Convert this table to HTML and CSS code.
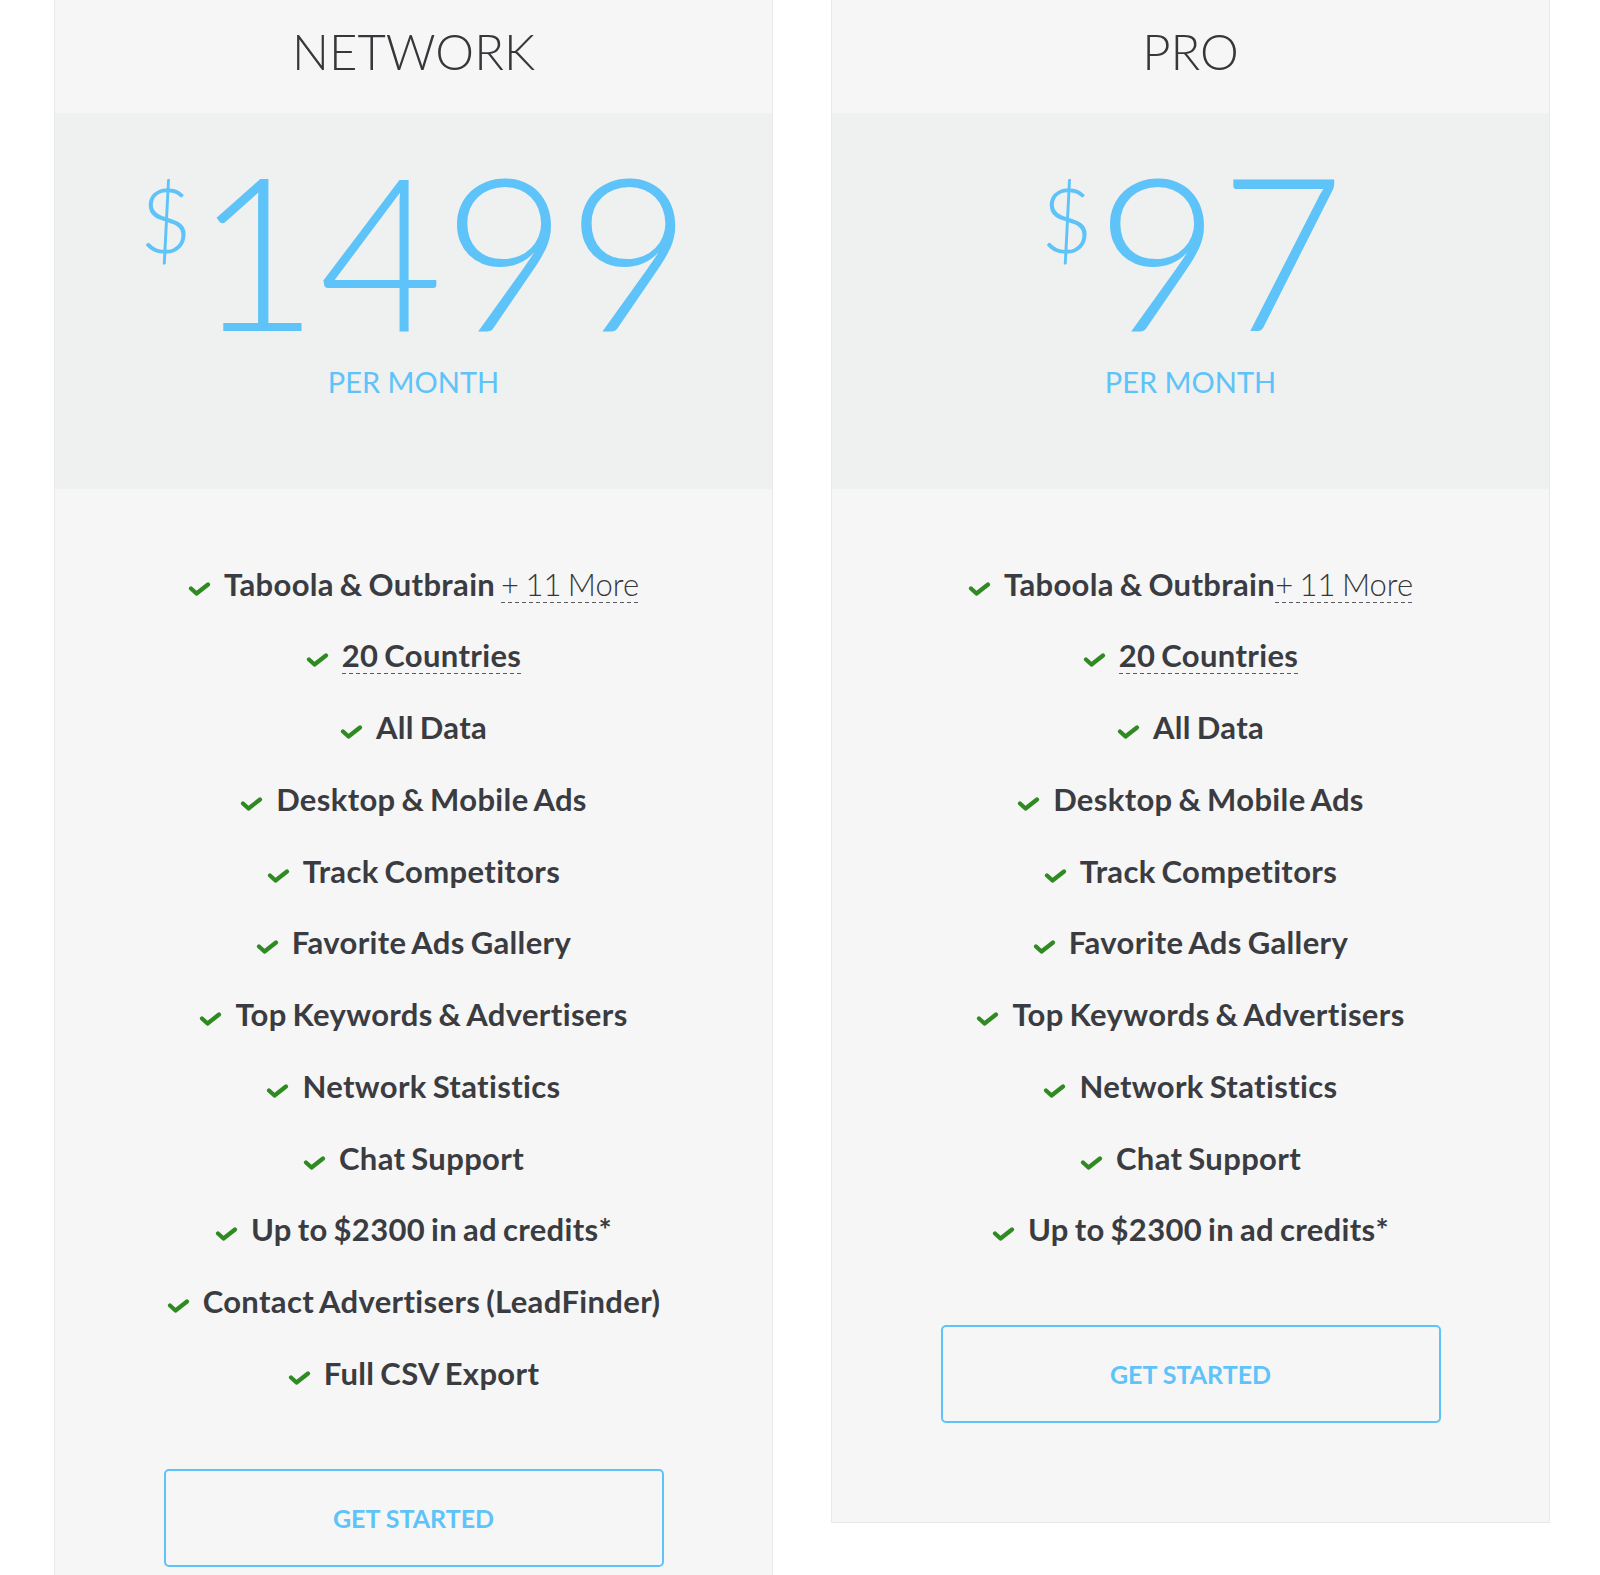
FILE: index.html
```html
<!DOCTYPE html>
<html lang="en">
<head>
<meta charset="utf-8">
<title>Pricing</title>
<link rel="stylesheet" href="styles.css">
</head>
<body>
<div class="page">
  <div class="plans">
    <section class="card">
      <header class="card-head"><h2>NETWORK</h2></header>
      <div class="price-band">
        <div class="price"><span class="cur">$</span><span class="amount">1499</span></div>
        <div class="period">PER MONTH</div>
      </div>
      <ul class="features">
        <li><svg class="chk" viewBox="0 0 22 14"><polyline points="2.5,6.5 8,11.5 19.5,2.5"/></svg>Taboola &amp; Outbrain <span class="more">+ 11 More</span></li>
        <li><svg class="chk" viewBox="0 0 22 14"><polyline points="2.5,6.5 8,11.5 19.5,2.5"/></svg><span class="dash">20 Countries</span></li>
        <li><svg class="chk" viewBox="0 0 22 14"><polyline points="2.5,6.5 8,11.5 19.5,2.5"/></svg>All Data</li>
        <li><svg class="chk" viewBox="0 0 22 14"><polyline points="2.5,6.5 8,11.5 19.5,2.5"/></svg>Desktop &amp; Mobile Ads</li>
        <li><svg class="chk" viewBox="0 0 22 14"><polyline points="2.5,6.5 8,11.5 19.5,2.5"/></svg>Track Competitors</li>
        <li><svg class="chk" viewBox="0 0 22 14"><polyline points="2.5,6.5 8,11.5 19.5,2.5"/></svg>Favorite Ads Gallery</li>
        <li><svg class="chk" viewBox="0 0 22 14"><polyline points="2.5,6.5 8,11.5 19.5,2.5"/></svg>Top Keywords &amp; Advertisers</li>
        <li><svg class="chk" viewBox="0 0 22 14"><polyline points="2.5,6.5 8,11.5 19.5,2.5"/></svg>Network Statistics</li>
        <li><svg class="chk" viewBox="0 0 22 14"><polyline points="2.5,6.5 8,11.5 19.5,2.5"/></svg>Chat Support</li>
        <li><svg class="chk" viewBox="0 0 22 14"><polyline points="2.5,6.5 8,11.5 19.5,2.5"/></svg>Up to $2300 in ad credits*</li>
        <li><svg class="chk" viewBox="0 0 22 14"><polyline points="2.5,6.5 8,11.5 19.5,2.5"/></svg>Contact Advertisers (LeadFinder)</li>
        <li><svg class="chk" viewBox="0 0 22 14"><polyline points="2.5,6.5 8,11.5 19.5,2.5"/></svg>Full CSV Export</li>
      </ul>
      <a class="btn" href="#">GET STARTED</a>
    </section>
    <section class="card">
      <header class="card-head"><h2>PRO</h2></header>
      <div class="price-band">
        <div class="price"><span class="cur">$</span><span class="amount">97</span></div>
        <div class="period">PER MONTH</div>
      </div>
      <ul class="features">
        <li><svg class="chk" viewBox="0 0 22 14"><polyline points="2.5,6.5 8,11.5 19.5,2.5"/></svg>Taboola &amp; Outbrain<span class="more">+ 11 More</span></li>
        <li><svg class="chk" viewBox="0 0 22 14"><polyline points="2.5,6.5 8,11.5 19.5,2.5"/></svg><span class="dash">20 Countries</span></li>
        <li><svg class="chk" viewBox="0 0 22 14"><polyline points="2.5,6.5 8,11.5 19.5,2.5"/></svg>All Data</li>
        <li><svg class="chk" viewBox="0 0 22 14"><polyline points="2.5,6.5 8,11.5 19.5,2.5"/></svg>Desktop &amp; Mobile Ads</li>
        <li><svg class="chk" viewBox="0 0 22 14"><polyline points="2.5,6.5 8,11.5 19.5,2.5"/></svg>Track Competitors</li>
        <li><svg class="chk" viewBox="0 0 22 14"><polyline points="2.5,6.5 8,11.5 19.5,2.5"/></svg>Favorite Ads Gallery</li>
        <li><svg class="chk" viewBox="0 0 22 14"><polyline points="2.5,6.5 8,11.5 19.5,2.5"/></svg>Top Keywords &amp; Advertisers</li>
        <li><svg class="chk" viewBox="0 0 22 14"><polyline points="2.5,6.5 8,11.5 19.5,2.5"/></svg>Network Statistics</li>
        <li><svg class="chk" viewBox="0 0 22 14"><polyline points="2.5,6.5 8,11.5 19.5,2.5"/></svg>Chat Support</li>
        <li><svg class="chk" viewBox="0 0 22 14"><polyline points="2.5,6.5 8,11.5 19.5,2.5"/></svg>Up to $2300 in ad credits*</li>
      </ul>
      <a class="btn" href="#">GET STARTED</a>
    </section>
  </div>
</div>
</body>
</html>
```

FILE: styles.css
```css
html, body {
  margin: 0;
  padding: 0;
  background: #ffffff;
}

body {
  font-family: Lato, "Open Sans", "Liberation Sans", sans-serif;
}

.page {
  height: 1575px;
  overflow: hidden;
}

.plans {
  display: flex;
  align-items: flex-start;
  gap: 58px;
  padding-left: 54px;
}

.card {
  box-sizing: border-box;
  width: 719px;
  background: #f6f6f6;
  border: 1px solid #e9e9e9;
  border-top: 0;
  display: flex;
  flex-direction: column;
  align-items: center;
  padding-bottom: 99px;
}

.card-head {
  box-sizing: border-box;
  width: 100%;
  height: 113px;
  padding-top: 22px;
  text-align: center;
}

.card-head h2 {
  margin: 0;
  font-size: 49px;
  line-height: 58px;
  font-weight: 300;
  color: #36373a;
}

.price-band {
  box-sizing: border-box;
  width: 100%;
  height: 376px;
  background: #eff0f0;
  padding-top: 30px;
  display: flex;
  flex-direction: column;
  align-items: center;
  color: #5ec3f8;
}

.price {
  display: flex;
  align-items: flex-start;
  height: 212px;
  margin-left: 4px;
}

.cur {
  font-size: 90px;
  line-height: 90px;
  font-weight: 300;
  margin-top: 30px;
  margin-right: 3px;
}

.amount {
  font-size: 214px;
  line-height: 212px;
  font-weight: 300;
}

.period {
  margin-top: 11px;
  font-size: 29px;
  line-height: 32px;
  font-weight: 400;
}

.features {
  list-style: none;
  margin: 0;
  padding: 59.5px 0 0;
  width: 100%;
}

.features li {
  text-align: center;
  font-size: 31px;
  line-height: 71.75px;
  font-weight: 700;
  letter-spacing: 0.35px;
  word-spacing: -2px;
  color: #3a3c41;
  white-space: nowrap;
}

.chk {
  width: 23px;
  height: 14px;
  margin-right: 13px;
  vertical-align: 0px;
  fill: none;
  stroke: #2f8a22;
  stroke-width: 4.2;
  stroke-linecap: round;
  stroke-linejoin: round;
}

.more {
  font-weight: 300;
  letter-spacing: 0;
  color: #36373b;
  background: repeating-linear-gradient(90deg, #5a5c61 0 4px, transparent 4px 7px) left bottom / 100% 1px no-repeat;
}

.dash {
  background: repeating-linear-gradient(90deg, #5a5c61 0 4px, transparent 4px 7px) left bottom / 100% 1px no-repeat;
}

.btn {
  box-sizing: border-box;
  margin-top: 59px;
  width: 500px;
  height: 98px;
  border: 2px solid #5ec3f8;
  border-radius: 5px;
  display: flex;
  align-items: center;
  justify-content: center;
  font-size: 25px;
  font-weight: 700;
  color: #5ec3f8;
  text-decoration: none;
}
```
